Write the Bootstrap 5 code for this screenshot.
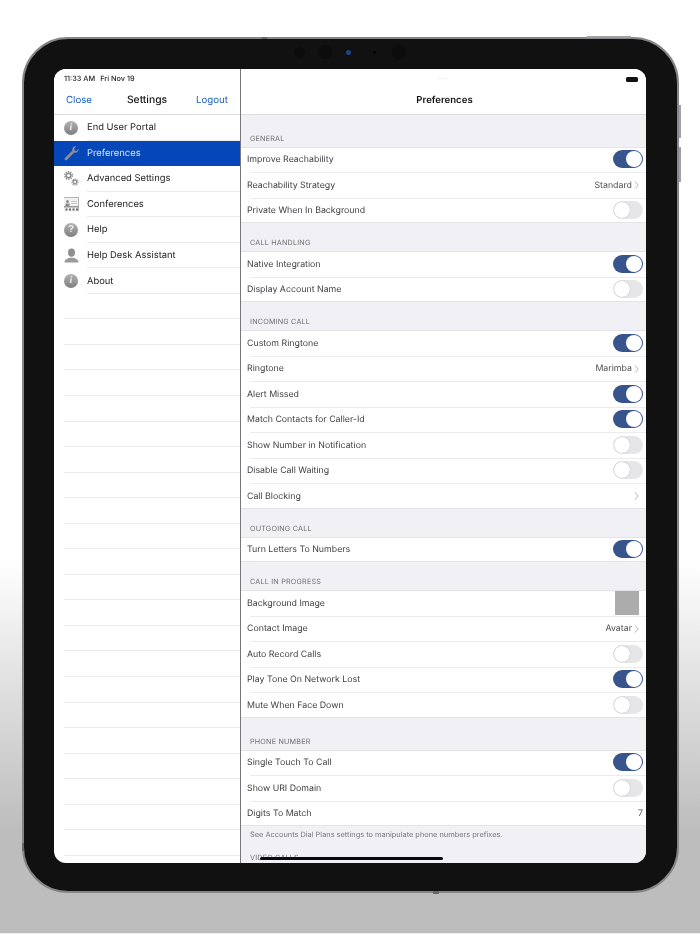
<!DOCTYPE html>
<html lang="en">
<head>
<meta charset="UTF-8">
<title>Preferences</title>
<link href="https://cdn.jsdelivr.net/npm/bootstrap@5.3.0/dist/css/bootstrap.min.css" rel="stylesheet">
<style>
  html, body { height: 934px; overflow: hidden; }
  body {
    background: linear-gradient(#fff 0, #fff 560px, #bdbdbd 830px, #bdbdbd 933px, #eee 933px);
    font-family: Inter, "Liberation Sans", sans-serif;
    color: #3a3a3c;
    text-rendering: geometricPrecision;
  }
  .tablet {
    position: relative;
    width: 657px;
    height: 856px;
    margin: 37px 0 0 22px;
    padding: 30px 31px 28px 30px;
    background: #111;
    border: 2px solid #86868a;
    border-radius: 46px;
    filter: blur(.3px);
  }
  .hw-btn { position: absolute; background: #a2a2a6; }
  .hw-top { top: -3px; left: 563px; width: 44px; height: 2px; }
  .hw-vol1 { top: 66px; right: -4px; width: 2px; height: 33px; }
  .hw-vol2 { top: 108px; right: -4px; width: 2px; height: 35px; }
  .hw-mark-top { top: -2px; left: 238px; width: 5px; height: 2px; background: #666; }
  .hw-mark-bottom { bottom: -3px; left: 409px; width: 6px; height: 3px; background: #666; }
  .hw-mark-left { top: 804px; left: -2px; width: 2px; height: 8px; background: #666; }
  .camera-row { position: absolute; top: 13px; left: 270px; height: 0; align-items: center; }
  .cam-dot { width: 14px; height: 14px; border-radius: 50%; background: #0c0c0c; flex: none; }
  .cam-dot-md { width: 11px; height: 11px; margin-right: 12.5px; }
  .cam-dot-mid { margin-right: 14.5px; }
  .cam-dot-sm { width: 5px; height: 5px; background: #1a4684; margin-right: 22px; }
  .cam-dot-xs { width: 3px; height: 3px; background: #060606; margin-right: 15.5px; }
  .screen { height: 794px; background: #fff; border-radius: 12px; overflow: hidden; position: relative; }

  .side-pane { width: 187px; flex: none; border-right: 1px solid #77777b; }
  .main-pane { flex: 1; background: #f0f0f5; overflow: hidden; }
  .top-bar { height: 46px; background: #fff; border-bottom: 1px solid #dcdce0; flex: none; }
  .status-row { height: 18px; padding: 2px 10px 0; font-size: 7.3px; font-weight: 500; color: #222; gap: 5px; }
  .nav-row { height: 26px; padding: 2px 12px 0; font-size: 9.7px; }
  .nav-side { flex: 1; }
  .nav-link-blue { color: #1a5fc4; text-decoration: none; }
  .nav-title { color: #111; font-size: 10.3px; font-weight: 500; }
  .main-title { font-size: 9.6px; font-weight: 600; color: #111; height: 26px; padding: 3px 0 0 2px; }

  .side-row { height: 25.55px; font-size: 9.4px; color: #222; }
  .side-icon { width: 33px; flex: none; padding-left: 10px; }
  .side-text { flex: 1; height: 100%; padding-top: 1px; display: flex; align-items: center; box-shadow: inset 0 -1px 0 #ececec; }
  .side-row.selected { background: #0546b8; color: #dce6f8; }
  .side-row.selected .side-text { box-shadow: none; }
  .side-empty { height: 25.55px; margin-left: 10px; box-shadow: inset 0 -1px 0 #ececec; }

  .info-dot {
    width: 14px; height: 14px; border-radius: 50%;
    background: linear-gradient(#b2b2b2, #7f7f7f);
    color: #eee; font: italic bold 10px/14px "Liberation Serif", serif; text-align: center;
  }
  .info-q { font: bold 10px/14px "Liberation Sans", sans-serif; }

  .group-label { height: 28px; padding: 0 0 2px 9px; font-size: 7.2px; letter-spacing: .2px; color: #6e6e73; display: flex; align-items: flex-end; }
  .group-first { height: 31.5px; }
  .group-tall { height: 32px; }
  .group-last { height: 18px; }
  .group-rows { background: #fff; box-shadow: inset 0 1px 0 #e4e4e8, inset 0 -1px 0 #e4e4e8; }
  .pref-row { height: 25.5px; padding: 0 3px 0 6px; font-size: 8.8px; color: #3f3f41; position: relative; }
  .pref-row + .pref-row::before {
    content: ""; position: absolute; top: 0; left: 9px; right: 0;
    border-top: 1px solid #ececee;
  }
  .pref-name { padding-top: 1px; }
  .pref-value { font-size: 8.8px; color: #505052; padding-top: 1px; }
  .chev { width: 5px; height: 8px; margin: 1px 4px 0 2px; }
  .sw {
    width: 30px; height: 18px; border-radius: 9px; background: #e6e6e8; position: relative; flex: none;
  }
  .sw::after {
    content: ""; position: absolute; top: 1px; left: 1px; width: 16px; height: 16px;
    border-radius: 50%; background: #fff; box-shadow: 0 0 1px rgba(0,0,0,.35);
  }
  .sw.on { background: #37548d; }
  .sw.on::after { left: 13px; box-shadow: none; }
  .bg-thumb { width: 24px; height: 24px; background: #acacac; margin-right: 4px; }
  .note-text { padding: 3px 0 0 9px; font-size: 7.4px; color: #77777c; height: 22px; }
  .home-bar { position: absolute; left: 206px; bottom: 3px; width: 183px; height: 3px; border-radius: 2px; background: #0a0a0a; }
  .battery { width: 12px; height: 5px; background: #111; border-radius: 1.5px; margin-right: 8px; }
  .dots3 { color: #d0d0d0; font-size: 7px; letter-spacing: 1px; }
</style>
</head>
<body>
<div class="tablet">
  <div class="hw-btn hw-top"></div>
  <div class="hw-btn hw-vol1"></div>
  <div class="hw-btn hw-vol2"></div>
  <div class="hw-btn hw-mark-top"></div>
  <div class="hw-btn hw-mark-bottom"></div>
  <div class="hw-btn hw-mark-left"></div>
  <div class="camera-row d-flex">
    <div class="cam-dot cam-dot-md"></div>
    <div class="cam-dot cam-dot-mid"></div>
    <div class="cam-dot cam-dot-sm"></div>
    <div class="cam-dot cam-dot-xs"></div>
    <div class="cam-dot"></div>
  </div>
  <div class="screen d-flex">
    <div class="side-pane d-flex flex-column">
      <div class="top-bar">
        <div class="status-row d-flex align-items-center"><span>11:33 AM</span><span>Fri Nov 19</span></div>
        <div class="nav-row d-flex align-items-center">
          <div class="nav-side"><a class="nav-link-blue" href="#">Close</a></div>
          <span class="nav-title">Settings</span>
          <div class="nav-side text-end"><a class="nav-link-blue" href="#">Logout</a></div>
        </div>
      </div>
      <div id="sideList"></div>
    </div>
    <div class="main-pane d-flex flex-column">
      <div class="top-bar">
        <div class="status-row d-flex align-items-center justify-content-center position-relative"><span class="dots3">···</span><div class="battery position-absolute end-0"></div></div>
        <div class="main-title d-flex align-items-center justify-content-center">Preferences</div>
      </div>
      <div id="prefList"></div>
    </div>
    <div class="home-bar"></div>
  </div>
</div>
<script>
  const icons = {
    info: '<div class="info-dot">i</div>',
    help: '<div class="info-dot info-q">?</div>',
    wrench: '<svg width="15" height="15" viewBox="0 0 15 15"><path d="M14.6 2.6c.3 1.7-.6 3.3-2.2 3.9-.8.3-1.5.2-2.1 0L3.2 13.7c-.7.7-1.6.8-2.2.2-.6-.6-.5-1.5.2-2.2l7.2-7.1c-.3-.7-.3-1.4 0-2.2C9 .9 10.700 0 12.300.400L10.200 2.500l.6 2 2 .5z" fill="#8d8d8d"/></svg>',
    gears: '<svg width="15" height="15" viewBox="0 0 15 15" fill="none" stroke="#8a8a8a"><circle cx="4.500" cy="4.500" r="2.300" stroke-width="1.500"/><circle cx="4.500" cy="4.500" r="3.800" stroke-width="1.400" stroke-dasharray="1.300 1.100"/><circle cx="11" cy="11" r="1.800" stroke-width="1.200"/><circle cx="11" cy="11" r="3" stroke-width="1.200" stroke-dasharray="1.100 .9"/></svg>',
    conf: '<svg width="15" height="15" viewBox="0 0 15 15"><rect y="0" width="15" height="14.500" fill="#f2f2f2"/><path d="M0 .5h15M14.500 0v14" stroke="#b4b4b4"/><circle cx="3.500" cy="4.500" r="1.300" fill="#777"/><rect x="1.500" y="6.500" width="4" height="2.500" fill="#888"/><path d="M7 4.500h6M7 6.500h6" stroke="#c4c4c4"/><rect x="0" y="9" width="15" height="1.500" fill="#999"/><path d="M2.500 11.500v2M6 11.500v2M9.500 11.500v2M13 11.500v2" stroke="#666" stroke-width="2"/></svg>',
    person: '<svg width="15" height="15" viewBox="0 0 15 15"><ellipse cx="7.500" cy="4.600" rx="3.500" ry="4.200" fill="#8f8f8f"/><path d="M.500 14.500c0-3.300 3.300-4 5-4.800h4c1.700.8 5 1.500 5 4.800z" fill="#9a9a9a"/></svg>'
  };
  const sideItems = [
    ['info', 'End User Portal'], ['wrench', 'Preferences', true], ['gears', 'Advanced Settings'],
    ['conf', 'Conferences'], ['help', 'Help'], ['person', 'Help Desk Assistant'], ['info', 'About']
  ];
  document.getElementById('sideList').innerHTML = sideItems.map(i =>
    `<div class="side-row d-flex align-items-center ${i[2] ? 'selected' : ''}"><div class="side-icon">${icons[i[0]]}</div><div class="side-text">${i[1]}</div></div>`
  ).join('') + '<div class="side-empty"></div>'.repeat(22);

  const chev = '<svg class="chev" viewBox="0 0 5 8"><path d="M1 .5 4.200 4 1 7.500" fill="none" stroke="#b4b4b8"/></svg>';
  const groups = [
    ['GENERAL', [['Improve Reachability', 1], ['Reachability Strategy', 'Standard'], ['Private When In Background', 0]], 'group-first'],
    ['CALL HANDLING', [['Native Integration', 1], ['Display Account Name', 0]]],
    ['INCOMING CALL', [['Custom Ringtone', 1], ['Ringtone', 'Marimba'], ['Alert Missed', 1], ['Match Contacts for Caller-Id', 1], ['Show Number in Notification', 0], ['Disable Call Waiting', 0], ['Call Blocking', '']]],
    ['OUTGOING CALL', [['Turn Letters To Numbers', 1]]],
    ['CALL IN PROGRESS', [['Background Image', 'thumb'], ['Contact Image', 'Avatar'], ['Auto Record Calls', 0], ['Play Tone On Network Lost', 1], ['Mute When Face Down', 0]]],
    ['PHONE NUMBER', [['Single Touch To Call', 1], ['Show URI Domain', 0], ['Digits To Match', '7']], 'group-tall']
  ];
  function rowRight(v) {
    if (v === 1) return '<div class="sw on"></div>';
    if (v === 0) return '<div class="sw"></div>';
    if (v === 'thumb') return '<div class="bg-thumb"></div>';
    if (v === '7') return '<span class="pref-value">7</span>';
    return `<span class="pref-value">${v}</span>${chev}`;
  }
  document.getElementById('prefList').innerHTML = groups.map(g =>
    `<div class="group-label ${g[2] || ''}">${g[0]}</div><div class="group-rows">` +
    g[1].map(r => `<div class="pref-row d-flex align-items-center"><span class="pref-name flex-grow-1">${r[0]}</span>${rowRight(r[1])}</div>`).join('') +
    '</div>'
  ).join('') +
    '<div class="note-text">See Accounts Dial Plans settings to manipulate phone numbers prefixes.</div><div class="group-label group-last">VIDEO CALLS</div>';
</script>
<script src="https://cdn.jsdelivr.net/npm/bootstrap@5.3.0/dist/js/bootstrap.bundle.min.js"></script>
</body>
</html>
